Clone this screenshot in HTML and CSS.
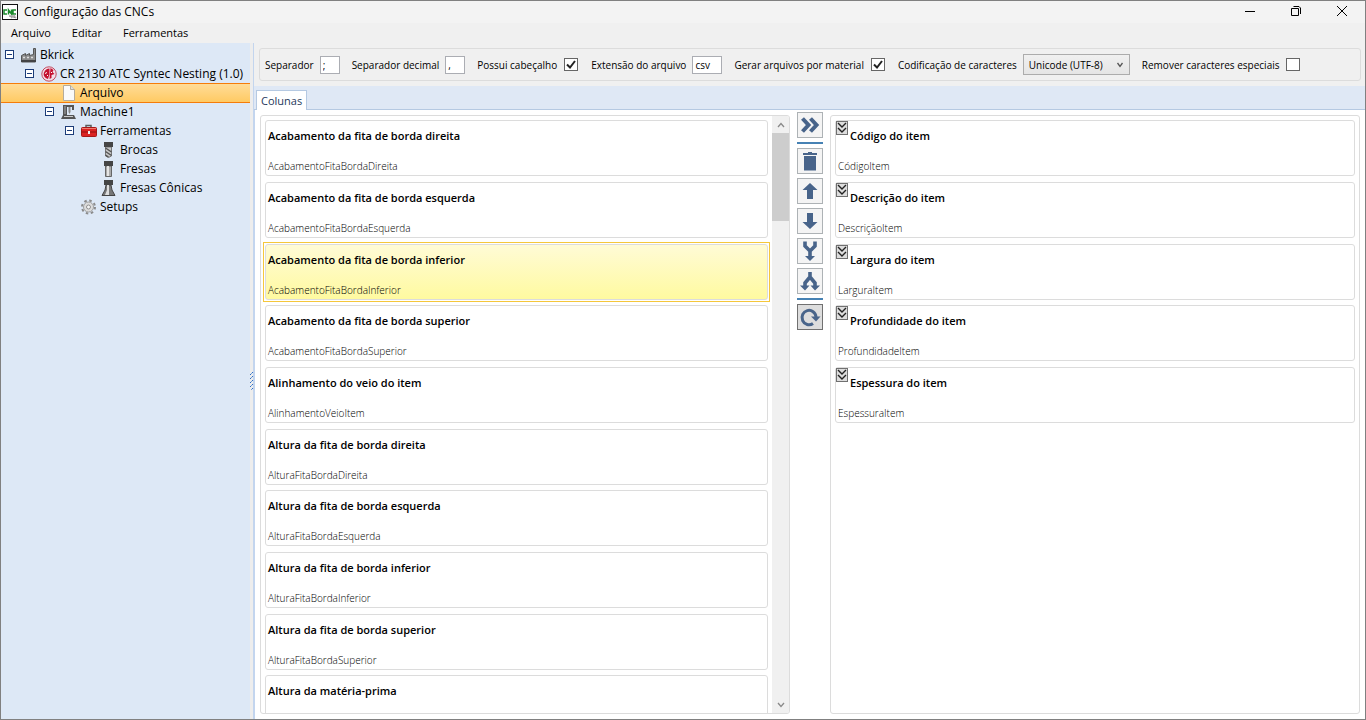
FILE: index.html
```html
<!DOCTYPE html>
<html lang="pt-BR">
<head>
<meta charset="utf-8">
<title>Configuração das CNCs</title>
<link rel="stylesheet" href="styles.css">
</head>
<body>
<div class="window">
  <header class="titlebar">
    <svg class="app-icon" width="16" height="16" viewBox="0 0 16 16" aria-hidden="true">
      <rect x=".5" y=".5" width="15" height="15" fill="#fff" stroke="#111"/>
      <path d="M5 6H2v4h3M6.500 10.500V6l3 4V5.500M14 6h-3v4h3" fill="none" stroke="#1b8a2c" stroke-width="1.500"/>
      <path d="M7 12h5l2 2M9 14l4-3" stroke="#aaa" stroke-width="1.500"/>
    </svg>
    <h1 class="title">Configuração das CNCs</h1>
    <div class="window-buttons">
      <button class="win-btn" aria-label="Minimizar"><svg width="12" height="12" viewBox="0 0 12 12"><path d="M1 6.500h10" stroke="#000"/></svg></button>
      <button class="win-btn" aria-label="Restaurar"><svg width="12" height="12" viewBox="0 0 12 12"><path d="M1.500 3.500h7v7h-7zM3.500 1.500h5.500l1.500 1.500v6" fill="none" stroke="#000" stroke-linejoin="round"/></svg></button>
      <button class="win-btn" aria-label="Fechar"><svg width="12" height="12" viewBox="0 0 12 12"><path d="M1 1l10 10M11 1L1 11" stroke="#000"/></svg></button>
    </div>
  </header>
  <nav class="menubar">
    <button class="menu">Arquivo</button>
    <button class="menu">Editar</button>
    <button class="menu">Ferramentas</button>
  </nav>
  <div class="workspace">
    <aside class="tree" role="tree">
      <div class="node level-0" role="treeitem">
        <button class="toggle" aria-label="Recolher"></button>
        <svg width="18" height="16" viewBox="0 0 18 16"><path d="M1.500 15V8.500l4-2v2l4-2v2l4-1V1.500h2V15z" fill="#8b8b8b" stroke="#555"/><path d="M1 13h15v2H1z" fill="#444"/><path d="M3 10.500h2M7 10.500h2M11 10.500h2" stroke="#ddd" stroke-width="1.500"/></svg>
        <span class="name">Bkrick</span>
      </div>
      <div class="node level-1" role="treeitem">
        <button class="toggle" aria-label="Recolher"></button>
        <svg width="18" height="16" viewBox="0 0 18 16"><circle cx="9" cy="8" r="7.200" fill="#f1dfe8" stroke="#c14a60"/><path d="M9.500 2.500v6L8 13C4.500 12 3 9.500 4 6.500c1-2.500 3-4 5.500-4z" fill="#c4102f"/><path d="M10.500 2l3 2-1 2 2 2-3 1v3l-2 1z" fill="#c4102f"/><path d="M5 7.500l2-1M7 10l1-1M11 7l1-1" stroke="#fff"/></svg>
        <span class="name">CR 2130 ATC Syntec Nesting (1.0)</span>
      </div>
      <div class="node level-2 selected" role="treeitem" aria-selected="true">
        <span class="no-toggle"></span>
        <svg width="18" height="16" viewBox="0 0 18 16"><path d="M3.500.500h7l4 4v11h-11z" fill="#fafafa" stroke="#b5ac9c"/><path d="M10.500.500v4h4" fill="#ddd" stroke="#b5ac9c"/></svg>
        <span class="name">Arquivo</span>
      </div>
      <div class="node level-2" role="treeitem">
        <button class="toggle" aria-label="Recolher"></button>
        <svg width="18" height="16" viewBox="0 0 18 16"><path d="M3 1h11v5h-2V3H7v8H3z" fill="#555"/><path d="M5 2v8" stroke="#aaa"/><path d="M8.500 3h2v5l-1 2-1-2z" fill="#888"/><path d="M3 11h11l2 4H1z" fill="#555"/><path d="M4 12.500h9" stroke="#ccc"/></svg>
        <span class="name">Machine1</span>
      </div>
      <div class="node level-3" role="treeitem">
        <button class="toggle" aria-label="Recolher"></button>
        <svg width="18" height="16" viewBox="0 0 18 16"><path d="M6 5V2.500h5V5" fill="none" stroke="#5c5c5c" stroke-width="1.500"/><rect x="1.500" y="4.500" width="15" height="9" rx="1" fill="#db2323" stroke="#a51818"/><path d="M2 5.500h14" stroke="#f07a6d"/><path d="M1.500 9h15" stroke="#901010"/><path d="M8 8h2v3H8z" fill="#eee"/></svg>
        <span class="name">Ferramentas</span>
      </div>
      <div class="node level-4" role="treeitem">
        <span class="no-toggle"></span>
        <svg width="18" height="16" viewBox="0 0 18 16"><path d="M5.500 5h6v9l-3 1.500-3-1.500z" fill="#c8c8c8" stroke="#777"/><path d="M5.500 6l6 4M5.500 9.500l6 4M5.500 13l3 2" stroke="#555" stroke-width="1.500"/><path d="M4 0h9v5H4z" fill="#454545"/></svg>
        <span class="name">Brocas</span>
      </div>
      <div class="node level-4" role="treeitem">
        <span class="no-toggle"></span>
        <svg width="18" height="16" viewBox="0 0 18 16"><path d="M5.500 5h6v10.500h-6z" fill="#aaa" stroke="#666"/><path d="M8 5v10" stroke="#e5e5e5" stroke-width="2"/><path d="M4 0h9v5H4z" fill="#454545"/></svg>
        <span class="name">Fresas</span>
      </div>
      <div class="node level-4" role="treeitem">
        <span class="no-toggle"></span>
        <svg width="18" height="16" viewBox="0 0 18 16"><path d="M6 5h5l1 5 3 5.500H2L5 10z" fill="#777" stroke="#444"/><path d="M7 5h2v10H5l2-5z" fill="#ddd"/><path d="M4 0h9v5H4z" fill="#454545"/></svg>
        <span class="name">Fresas Cônicas</span>
      </div>
      <div class="node level-3" role="treeitem">
        <span class="no-toggle"></span>
        <svg width="18" height="16" viewBox="0 0 18 16"><circle cx="8.500" cy="8" r="6.500" fill="none" stroke="#8b8b8b" stroke-width="2" stroke-dasharray="2.500 2.600"/><circle cx="8.500" cy="8" r="5" fill="#dcdcdc" stroke="#a0a0a0"/><circle cx="8.500" cy="8" r="2" fill="#f5f5f5" stroke="#909090"/></svg>
        <span class="name">Setups</span>
      </div>
    </aside>
    <div class="splitter" role="separator">
      <svg width="3" height="18" viewBox="0 0 3 18"><path d="M2 0h1v1H2zM0 2h1v1H0zM2 4h1v1H2zM0 6h1v1H0zM2 8h1v1H2zM0 10h1v1H0zM2 12h1v1H2zM0 14h1v1H0zM2 16h1v1H2z" fill="#2f6fc8"/><path d="M1 1h1v1H1zM1 5h1v1H1zM1 9h1v1H1zM1 13h1v1H1zM1 17h1v1H1z" fill="#6fa0dc"/></svg>
    </div>
    <main class="content">
      <form class="options">
        <div class="field"><label for="sep">Separador</label><input class="text narrow" id="sep" type="text" value=";"></div>
        <div class="field"><label for="dec">Separador decimal</label><input class="text narrow" id="dec" type="text" value=","></div>
        <div class="field"><label for="head">Possui cabeçalho</label><input class="check" id="head" type="checkbox" checked></div>
        <div class="field"><label for="ext">Extensão do arquivo</label><input class="text wide" id="ext" type="text" value="csv"></div>
        <div class="field"><label for="mat">Gerar arquivos por material</label><input class="check" id="mat" type="checkbox" checked></div>
        <div class="field"><label for="enc">Codificação de caracteres</label><select class="select" id="enc"><option>Unicode (UTF-8)</option></select></div>
        <div class="field"><label for="spec">Remover caracteres especiais</label><input class="check" id="spec" type="checkbox"></div>
      </form>
      <div class="tabs" role="tablist"><button class="tab" role="tab" aria-selected="true">Colunas</button></div>
      <div class="panel">
        <section class="list">
          <div class="cards">
            <article class="card"><h2>Acabamento da fita de borda direita</h2><p>AcabamentoFitaBordaDireita</p></article>
            <article class="card"><h2>Acabamento da fita de borda esquerda</h2><p>AcabamentoFitaBordaEsquerda</p></article>
            <article class="card current"><h2>Acabamento da fita de borda inferior</h2><p>AcabamentoFitaBordaInferior</p></article>
            <article class="card"><h2>Acabamento da fita de borda superior</h2><p>AcabamentoFitaBordaSuperior</p></article>
            <article class="card"><h2>Alinhamento do veio do item</h2><p>AlinhamentoVeioItem</p></article>
            <article class="card"><h2>Altura da fita de borda direita</h2><p>AlturaFitaBordaDireita</p></article>
            <article class="card"><h2>Altura da fita de borda esquerda</h2><p>AlturaFitaBordaEsquerda</p></article>
            <article class="card"><h2>Altura da fita de borda inferior</h2><p>AlturaFitaBordaInferior</p></article>
            <article class="card"><h2>Altura da fita de borda superior</h2><p>AlturaFitaBordaSuperior</p></article>
            <article class="card"><h2>Altura da matéria-prima</h2></article>
          </div>
          <div class="scrollbar">
            <button class="scroll-btn" aria-label="Rolar para cima"><svg width="8" height="6" viewBox="0 0 8 6"><path d="M1 5l3-3.500L7 5" fill="none" stroke="#8a8a8a" stroke-width="1.300"/></svg></button>
            <div class="track"><div class="thumb"></div></div>
            <button class="scroll-btn" aria-label="Rolar para baixo"><svg width="8" height="6" viewBox="0 0 8 6"><path d="M1 1l3 3.500L7 1" fill="none" stroke="#8a8a8a" stroke-width="1.300"/></svg></button>
          </div>
        </section>
        <div class="actions">
          <button class="action" aria-label="Adicionar"><svg width="22" height="22" viewBox="0 0 22 22"><path d="M3.500 4.500l6 6.500-6 6.500M11.500 4.500l6 6.500-6 6.500" fill="none" stroke="#48648a" stroke-width="4"/></svg></button>
          <hr class="rule">
          <button class="action" aria-label="Excluir"><svg width="22" height="22" viewBox="0 0 22 22"><path d="M4 3h5V2h4v1h5v2H4zM5 6h12v14.500H5z" fill="#48648a"/></svg></button>
          <button class="action" aria-label="Mover para cima"><svg width="22" height="22" viewBox="0 0 22 22"><path d="M11 3l7.500 7H14v9H8v-9H3.500z" fill="#48648a"/></svg></button>
          <button class="action" aria-label="Mover para baixo"><svg width="22" height="22" viewBox="0 0 22 22"><path d="M11 19l7.500-7H14V3H8v9H3.500z" fill="#48648a"/></svg></button>
          <button class="action" aria-label="Unir"><svg width="22" height="22" viewBox="0 0 22 22"><path d="M6 1.500V6l5 5 5-5V1.500M11 10v8" fill="none" stroke="#48648a" stroke-width="3.600"/><path d="M6 16h10l-5 5z" fill="#48648a"/></svg></button>
          <button class="action" aria-label="Separar"><svg width="22" height="22" viewBox="0 0 22 22"><path d="M11 2v6M11 7l-5 6v5M11 7l5 6v5" fill="none" stroke="#48648a" stroke-width="3.600"/><path d="M1 15.500h9.500L6 20.500zM11.500 15.500H21l-5 5z" fill="#48648a"/></svg></button>
          <hr class="rule">
          <button class="action pressed" aria-label="Atualizar"><svg width="22" height="22" viewBox="0 0 22 22"><path d="M14 17.500a7 7.200 0 1 1 3-6.500" fill="none" stroke="#48648a" stroke-width="3"/><path d="M12 10.500h9.500L17 15.500z" fill="#48648a"/></svg></button>
        </div>
        <section class="list">
          <div class="cards">
            <article class="card chosen"><button class="expand" aria-label="Expandir"><svg width="12" height="14" viewBox="0 0 12 14"><path d="M2 2l4 4 4-4M2 7l4 4 4-4" fill="none" stroke="#222" stroke-width="1.400"/></svg></button><h2>Código do item</h2><p>CódigoItem</p></article>
            <article class="card chosen"><button class="expand" aria-label="Expandir"><svg width="12" height="14" viewBox="0 0 12 14"><path d="M2 2l4 4 4-4M2 7l4 4 4-4" fill="none" stroke="#222" stroke-width="1.400"/></svg></button><h2>Descrição do item</h2><p>DescriçãoItem</p></article>
            <article class="card chosen"><button class="expand" aria-label="Expandir"><svg width="12" height="14" viewBox="0 0 12 14"><path d="M2 2l4 4 4-4M2 7l4 4 4-4" fill="none" stroke="#222" stroke-width="1.400"/></svg></button><h2>Largura do item</h2><p>LarguraItem</p></article>
            <article class="card chosen"><button class="expand" aria-label="Expandir"><svg width="12" height="14" viewBox="0 0 12 14"><path d="M2 2l4 4 4-4M2 7l4 4 4-4" fill="none" stroke="#222" stroke-width="1.400"/></svg></button><h2>Profundidade do item</h2><p>ProfundidadeItem</p></article>
            <article class="card chosen"><button class="expand" aria-label="Expandir"><svg width="12" height="14" viewBox="0 0 12 14"><path d="M2 2l4 4 4-4M2 7l4 4 4-4" fill="none" stroke="#222" stroke-width="1.400"/></svg></button><h2>Espessura do item</h2><p>EspessuraItem</p></article>
          </div>
        </section>
      </div>
    </main>
  </div>
</div>
</body>
</html>
```
FILE: styles.css
```css
* { box-sizing: border-box; }
body { margin: 0; font: 10px/16px "Open Sans", "Noto Sans", sans-serif; color: #000; }
button, input, select { font: inherit; color: inherit; }
button { padding: 0; border: 0; background: none; }
svg { display: block; flex: none; }
h1, h2, p { margin: 0; font-size: inherit; }

.window { height: 100vh; display: flex; flex-direction: column; border: 1px solid #808080; background: #f0f0f0; overflow: hidden; }
.titlebar { flex: none; height: 22px; display: flex; align-items: center; background: #f3f3f3; padding-left: 1px; }
.title { margin-left: 6px; font-weight: 400; font-size: 12px; }
.window-buttons { align-self: flex-start; margin-left: auto; display: flex; }
.win-btn { width: 46px; height: 19px; display: flex; align-items: center; justify-content: center; }
.menubar { flex: none; height: 20px; display: flex; padding-left: 10px; gap: 21px; }
.menu { height: 20px; font-size: 11px; }
.workspace { flex: 1; min-height: 0; display: flex; }

.tree { flex: none; width: 249px; background: #dde8f6; padding-top: 2px; font-size: 12px; }
.node { height: 19px; display: flex; align-items: center; white-space: nowrap; }
.node.selected { height: 20px; margin-bottom: -1px; border: solid #f57c0a; border-width: 1px 0; background: linear-gradient(#ffdc98, #ffca63); }
.level-0 { padding-left: 4px; }
.level-1 { padding-left: 24px; }
.level-2 { padding-left: 44px; }
.level-3 { padding-left: 64px; }
.level-4 { padding-left: 84px; }
.toggle { width: 9px; height: 9px; margin-right: 6px; border: 1px solid #1c3c78; background: linear-gradient(#1c3c78, #1c3c78) center / 5px 1px no-repeat #fff; }
.no-toggle { width: 15px; }
.name { margin-left: 2px; }

.splitter { flex: none; width: 4px; display: flex; align-items: center; background: #ededed; border-right: 1px solid #c3d5ee; }
.content { flex: 1; min-width: 0; display: flex; flex-direction: column; }
.options { flex: none; height: 33px; margin: 5px 4px 5px 5px; padding-left: 5px; display: flex; align-items: center; gap: 12px; border: 1px solid #dcdcdc; border-radius: 3px; white-space: nowrap; }
.field { display: flex; align-items: center; gap: 6px; }
.text { height: 18px; padding: 0 2px; border: 1px solid #abadb3; background: #fff; }
.narrow { width: 20px; }
.wide { width: 30px; }
.check { appearance: none; width: 14px; height: 13px; margin: 0 1px; border: 1px solid #666; background: #fff; }
.check:checked { background: #fff url("data:image/svg+xml,%3Csvg xmlns='http://www.w3.org/2000/svg' viewBox='0 0 12 11'%3E%3Cpath d='M2 5.500l3 3L10 2' fill='none' stroke='%23222' stroke-width='2'/%3E%3C/svg%3E") center / 12px 11px no-repeat; }
.select { appearance: none; width: 107px; height: 21px; padding: 0 5px; border: 1px solid #acacac; border-radius: 0; background: url("data:image/svg+xml,%3Csvg xmlns='http://www.w3.org/2000/svg' viewBox='0 0 8 6'%3E%3Cpath d='M1.500 1L4 4.500 6.500 1' fill='none' stroke='%23555' stroke-width='1.300'/%3E%3C/svg%3E") right 5px center / 8px 6px no-repeat, linear-gradient(#f0f0f0, #e5e5e5); }

.tabs { flex: none; height: 24px; display: flex; align-items: flex-end; padding-left: 2px; background: #dfe8f5; border-bottom: 1px solid #b5c9e2; }
.tab { height: 20px; margin-bottom: -1px; padding: 0 4px; border: 1px solid #b5c9e2; border-bottom: 0; background: #fff; color: #1e395b; font-size: 11px; }
.panel { flex: 1; min-height: 0; display: grid; grid-template-columns: minmax(0, 1fr) 40px minmax(0, 1fr); padding: 5px 5px; background: #fff; border-left: 1px solid #c3d5ee; }
.list { min-height: 0; display: flex; overflow: hidden; border: 1px solid #dcdcdc; border-radius: 3px; }
.cards { flex: 1; min-width: 0; padding: 4px 4px 0; }
.card { position: relative; height: 56px; margin-bottom: 6px; padding: 7px 2px 0; border: 1px solid #dcdcdc; border-radius: 3px; }
.card:nth-child(3n) { margin-bottom: 5px; }
.card h2 { font-size: 11px; font-weight: 600; }
.card p { margin-top: 14px; font-weight: 300; }
.card.current { background: linear-gradient(#fffbd6, #fffaa0); }
.card.current::after { content: ""; position: absolute; inset: -3px; border: 1px solid #f5c73b; }
.chosen h2 { padding-left: 12px; }
.expand { position: absolute; left: 0; top: 0; width: 12px; height: 14px; border: 1px solid #707070; background: #ddd; display: flex; align-items: center; justify-content: center; }
.scrollbar { flex: none; width: 17px; display: flex; flex-direction: column; background: #f0f0f0; }
.scroll-btn { height: 17px; display: flex; align-items: center; justify-content: center; }
.track { flex: 1; }
.thumb { height: 15.600%; background: #cdcdcd; }
.actions { display: flex; flex-direction: column; align-items: center; gap: 4px; margin-top: -3px; }
.action { width: 26px; height: 26px; display: flex; align-items: center; justify-content: center; border: 1px solid #adb2b5; background: #f4f4f4; }
.action.pressed { border-color: #707070; background: #dddddd; }
.rule { width: 26px; height: 2px; margin: 0; border: 0; background: #4682b4; }
```
